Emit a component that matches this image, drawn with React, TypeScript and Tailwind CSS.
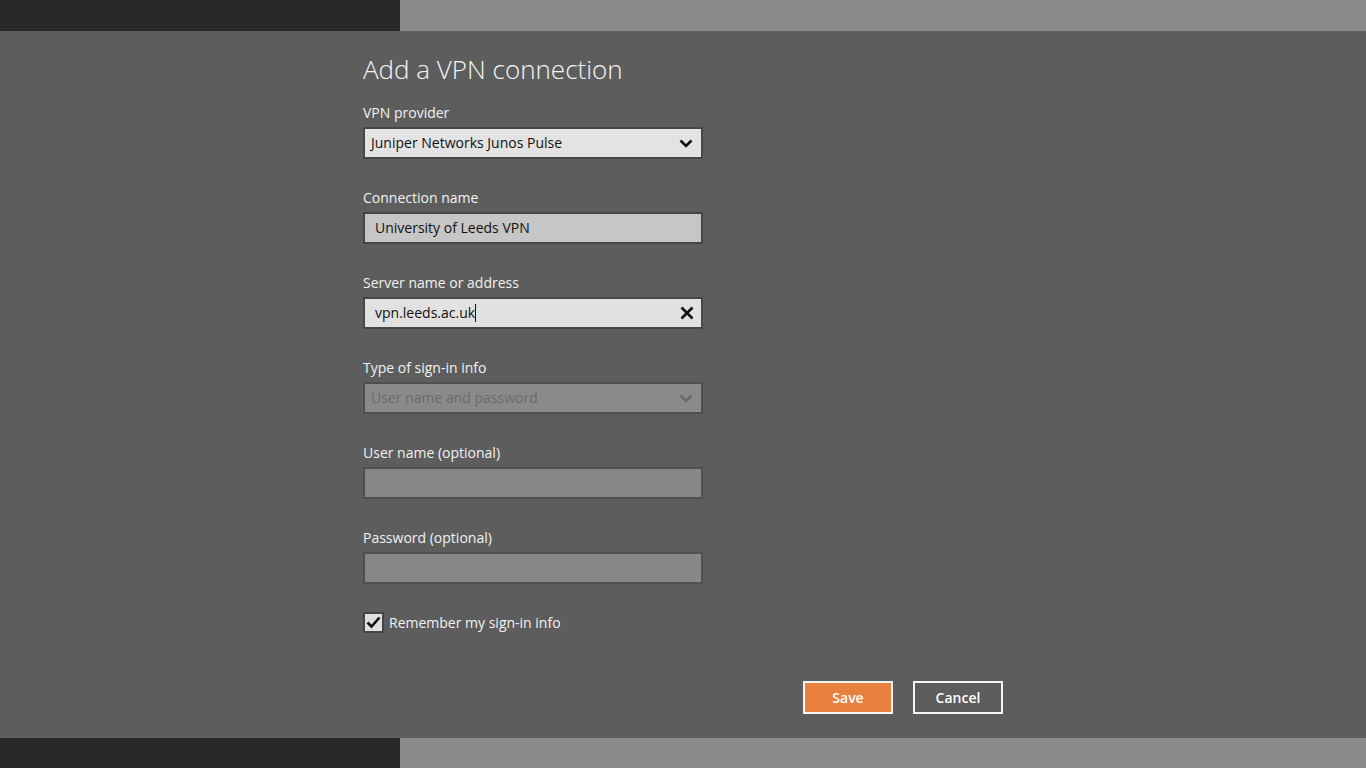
import React from 'react'

const font = { fontFamily: '"Segoe UI", "Open Sans", "Noto Sans", sans-serif' }

function Band() {
  return (
    <div className="flex h-[31px] w-full">
      <div className="w-[400px] bg-[#292929]" />
      <div className="flex-1 bg-[#8a8a8a]" />
    </div>
  )
}

function Chevron({ color }: { color: string }) {
  return (
    <svg width="14" height="9" viewBox="0 0 14 9" className="shrink-0">
      <path d="M1.5 1.5 L7 7 L12.5 1.5" fill="none" stroke={color} strokeWidth="2.6" />
    </svg>
  )
}

function Field({ label, children, last }: { label: string; children: React.ReactNode; last?: boolean }) {
  return (
    <div className={last ? 'mb-[28px]' : 'mb-[30px]'}>
      <div className="text-[14px] leading-[18px] text-[#f2f2f2] mb-[5px]">{label}</div>
      {children}
    </div>
  )
}

export default function App() {
  return (
    <div className="w-[1366px] h-[768px] overflow-hidden bg-[#5d5d5d]" style={font}>
      <Band />
      <div className="h-[707px] pl-[363px] pt-[18px]">
        <div className="w-[640px]">
          <h1 className="text-[26px] leading-[40px] font-light text-[#f5f5f5] mb-[15px]">Add a VPN connection</h1>

          <Field label="VPN provider">
            <div className="w-[340px] h-[32px] border-2 border-[#464646] bg-[#e3e3e3] flex items-center justify-between pl-[6px] pr-[8px]">
              <span className="text-[14px] leading-[18px] text-[#111]">Juniper Networks Junos Pulse</span>
              <Chevron color="#111" />
            </div>
          </Field>

          <Field label="Connection name">
            <div className="w-[340px] h-[32px] border-2 border-[#464646] bg-[#c6c6c6] flex items-center pl-[10px] pb-[1px]">
              <span className="text-[14px] leading-[18px] text-[#111]">University of Leeds VPN</span>
            </div>
          </Field>

          <Field label="Server name or address">
            <div className="w-[340px] h-[32px] border-2 border-[#464646] bg-[#e1e1e1] flex items-center justify-between pl-[10px] pr-[7px]">
              <span className="text-[14px] leading-[18px] text-[#111] flex items-center pb-[1px]">
                vpn.leeds.ac.uk<span className="inline-block w-px h-[18px] bg-[#111]" />
              </span>
              <svg width="14" height="14" viewBox="0 0 14 14">
                <path d="M1.5 1.5 L12.5 12.5 M12.5 1.5 L1.5 12.5" stroke="#111" strokeWidth="2.6" />
              </svg>
            </div>
          </Field>

          <Field label="Type of sign-in info">
            <div className="w-[340px] h-[32px] border-2 border-[#4f4f4f] bg-[#8a8a8a] flex items-center justify-between pl-[6px] pr-[8px]">
              <span className="text-[14px] leading-[18px] text-[#6b6b6b]">User name and password</span>
              <Chevron color="#6b6b6b" />
            </div>
          </Field>

          <Field label="User name (optional)">
            <div className="w-[340px] h-[32px] border-2 border-[#4f4f4f] bg-[#888888]" />
          </Field>

          <Field label="Password (optional)" last>
            <div className="w-[340px] h-[32px] border-2 border-[#4f4f4f] bg-[#888888]" />
          </Field>

          <div className="flex items-center gap-[5px]">
            <div className="w-[21px] h-[21px] border-2 border-[#464646] bg-[#e0e0e0] flex items-center justify-center">
              <svg width="15" height="13" viewBox="0 0 15 13">
                <path d="M1.5 6.5 L5.5 10.5 L13.5 1.5" fill="none" stroke="#111" strokeWidth="2.6" />
              </svg>
            </div>
            <span className="text-[14px] text-[#f2f2f2]">Remember my sign-in info</span>
          </div>

          <div className="flex justify-end gap-[20px] mt-[48px]">
            <button className="w-[90px] h-[33px] border-2 border-[#f5f5f5] bg-[#e8803f] text-white text-[14px] font-semibold">
              Save
            </button>
            <button className="w-[90px] h-[33px] border-2 border-[#f5f5f5] bg-transparent text-white text-[14px] font-semibold">
              Cancel
            </button>
          </div>
        </div>
      </div>
      <Band />
    </div>
  )
}
